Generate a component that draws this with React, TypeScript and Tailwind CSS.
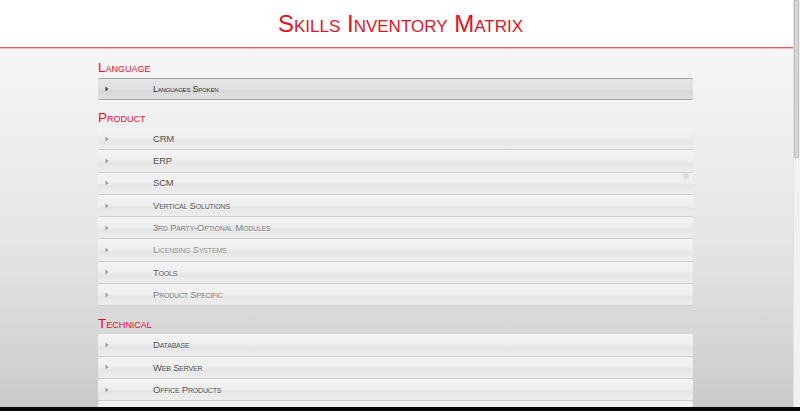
import React from "react";

interface Section {
  title: string;
  items: { label: string; tone: string }[];
}

const sections: Section[] = [
  {
    title: "Language",
    items: [{ label: "Languages Spoken", tone: "text-[#333]" }],
  },
  {
    title: "Product",
    items: [
      { label: "CRM", tone: "text-[#4a4a4a]" },
      { label: "ERP", tone: "text-[#4a4a4a]" },
      { label: "SCM", tone: "text-[#4a4a4a]" },
      { label: "Vertical Solutions", tone: "text-[#555]" },
      { label: "3rd Party-Optional Modules", tone: "text-[#777]" },
      { label: "Licensing Systems", tone: "text-[#888]" },
      { label: "Tools", tone: "text-[#555]" },
      { label: "Product Specific", tone: "text-[#777]" },
    ],
  },
  {
    title: "Technical",
    items: [
      { label: "Database", tone: "text-[#4a4a4a]" },
      { label: "Web Server", tone: "text-[#4a4a4a]" },
      { label: "Office Products", tone: "text-[#4a4a4a]" },
      { label: "", tone: "text-[#4a4a4a]" },
    ],
  },
];

const Arrow: React.FC<{ dark?: boolean }> = ({ dark }) => (
  <svg width="4" height="6" viewBox="0 0 4 6" className="shrink-0">
    <path d="M0.5 0.5 L3.5 3 L0.5 5.5 Z" fill={dark ? "#444" : "#9a9a9a"} />
  </svg>
);

const Row: React.FC<{ label: string; tone: string; active?: boolean; dot?: boolean }> = ({
  label,
  tone,
  active,
  dot,
}) => {
  if (active) {
    return (
      <div className="relative flex h-[22px] items-center rounded-[2px] border-y border-[#a0a0a0] bg-[linear-gradient(to_bottom,#e6e6e6_0%,#e2e2e2_45%,#d6d6d6_62%,#dedede_85%,#e2e2e2_100%)] pl-[7px] shadow-[0_1px_0_#f8f8f8]">
        <Arrow dark />
        <span className={`ml-[44px] text-[9px] leading-none tracking-[-0.2px] [font-variant:small-caps] ${tone}`}>{label}</span>
      </div>
    );
  }
  return (
    <div className="relative flex h-[22.3px] items-center rounded-[2px] border-b-[1.5px] border-[#cfcfcf] bg-[linear-gradient(to_bottom,#f3f3f3_0%,#efefef_45%,#e5e5e5_62%,#ebebeb_85%,#ededed_100%)] pl-[7px]">
      <Arrow />
      <span className={`ml-[44px] text-[9.5px] leading-none tracking-[-0.2px] [font-variant:small-caps] [text-shadow:0_1px_0_#fff] ${tone}`}>
        {label}
      </span>
      {dot && <span className="absolute right-[4px] top-[0px] h-[6px] w-[6px] rounded-full bg-[#d8d8d8] blur-[1px]" />}
    </div>
  );
};

export default function App() {
  return (
    <div className="flex h-[416px] w-[800px] flex-col overflow-hidden bg-white font-['Liberation_Sans',Arial,sans-serif]">
      <div className="flex h-[407px] shrink-0">
        <div className="flex w-[793px] flex-col overflow-hidden">
          <header className="flex h-[47px] shrink-0 items-end justify-center bg-white pb-[11px] pl-[8px]">
            <h1 className="text-[24px] leading-none text-[#e8101e] [font-variant:small-caps]">Skills Inventory Matrix</h1>
          </header>
          <div className="h-px shrink-0 bg-[#ec5a5a]" />
          <div className="h-px shrink-0 bg-[#f7b9b9]" />
          <main className="flex-1 bg-[linear-gradient(to_bottom,#f6f6f6_0%,#e6e6e6_50%,#c8c8c8_100%)] pl-[98px] pt-[11px]">
            <div className="w-[595px]">
              {sections.map((s, si) => (
                <section key={s.title} className={si === 0 ? "" : "mt-[10px]"}>
                  <h2 className="mb-[2px] text-[13.5px] leading-[16px] text-[#e8101e] [font-variant:small-caps]">{s.title}</h2>
                  <div className="flex flex-col">
                    {s.items.map((it, i) => (
                      <Row
                        key={it.label || `row-${i}`}
                        label={it.label}
                        tone={it.tone}
                        active={si === 0}
                        dot={si === 1 && i === 2}
                      />
                    ))}
                  </div>
                </section>
              ))}
            </div>
          </main>
        </div>
        <div className="flex w-[7px] shrink-0 flex-col border-l border-[#e2e2e2] bg-[#f1f1f1]">
          <div className="h-[158px] w-[5px] rounded-[1px] border border-[#bdbdbd] bg-[#d6d6d6]" />
        </div>
      </div>
      <div className="h-[4px] shrink-0 bg-[#0a0a0a]" />
      <div className="flex-1 bg-white" />
    </div>
  );
}
